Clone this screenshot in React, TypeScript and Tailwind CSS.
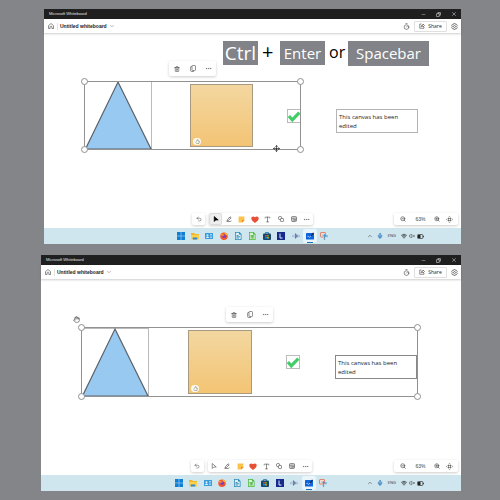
import type { ReactNode } from "react";
import {
  Trash2,
  Copy,
  Ellipsis,
  Undo2,
  Timer,
  ChevronDown,
  ChevronUp,
  ZoomIn,
  ZoomOut,
  Minus,
  X,
  Mic,
  Wifi,
  VolumeX,
  Type,
  Hand,
  Move,
} from "lucide-react";

const HomeIcon = () => (
  <svg viewBox="0 0 12 12" className="size-[6px]" fill="none" stroke="#444" strokeWidth="1.2">
    <path d="M1 5.2 6 1l5 4.2V11H7.8V7.5a1 1 0 0 0-1-1H5.2a1 1 0 0 0-1 1V11H1z" strokeLinejoin="round" />
  </svg>
);

const GearIcon = () => (
  <svg viewBox="0 0 12 12" className="size-[7px]" fill="none" stroke="#444" strokeWidth="1.1">
    <path d="M4.7 1h2.6l.5 1.4 1.7-.2 1.2 2.2L9.700 6l1 1.600-1.200 2.200-1.700-.2L7.300 11H4.700l-.5-1.400-1.700.2-1.200-2.200 1-1.600-1-1.600 1.200-2.200 1.700.2z" strokeLinejoin="round" />
    <circle cx="6" cy="6" r="1.7" />
  </svg>
);

const ShareIcon = () => (
  <svg viewBox="0 0 12 12" className="size-[6px]" fill="none" stroke="#444" strokeWidth="1.2">
    <path d="M5 2H1.500v8.500H10V8M4 7.500C4.300 5 6 4 8 4V2l3 3-3 3V6C6 6 5 6.400 4 7.500z" strokeLinejoin="round" />
  </svg>
);

const FitIcon = () => (
  <svg viewBox="0 0 14 14" className="size-[7px]" fill="none" stroke="#444" strokeWidth="1.2">
    <rect x="4.500" y="4.500" width="5" height="5" />
    <path d="M5 2.500 7 .7l2 1.800M5 11.500l2 1.800 2-1.800M2.500 5 .7 7l1.800 2M11.500 5l1.800 2-1.800 2" />
  </svg>
);

const PointerIcon = ({ filled }: { filled: boolean }) => (
  <svg viewBox="0 0 12 12" className="size-[6px]" fill={filled ? "#000" : "none"} stroke={filled ? "#000" : "#555"} strokeWidth="1.3">
    <path d="M2.500 1v10L5.500 8h5z" strokeLinejoin="round" />
  </svg>
);

const PenIcon = () => (
  <svg viewBox="0 0 12 12" className="size-[6px]" fill="none" stroke="#444" strokeWidth="1.2">
    <path d="M2.500 8 8 1.500 10.300 3.500 5 9l-3 .5zM1 11h7c1 0 2-.5 3-1.500M7 3l2 2" strokeLinejoin="round" />
  </svg>
);

const NoteIcon = () => (
  <svg viewBox="0 0 12 12" className="size-[7px]">
    <path d="M1 1h10v6.500L7.500 11H1z" fill="#fbc34b" />
    <path d="M11 7H7v4z" fill="#e8861c" />
  </svg>
);

const HeartIcon = () => (
  <svg viewBox="0 0 14 12" className="h-[7px] w-[8px]">
    <path d="M7 12C3 9.500.5 7 .5 4 .5 1 4.500-.6 7 2.200 9.500-.6 13.500 1 13.500 4c0 3-2.500 5.500-6.500 8z" fill="#e94f35" />
  </svg>
);

const ShapesIcon = () => (
  <svg viewBox="0 0 12 12" className="size-[6px]" fill="none" stroke="#444" strokeWidth="1.2">
    <circle cx="4.200" cy="4.200" r="3.400" />
    <rect x="5" y="5" width="6" height="6" rx="1.200" fill="#fff" />
  </svg>
);

const TemplateIcon = () => (
  <svg viewBox="0 0 12 12" className="size-[6px]" fill="none" stroke="#444" strokeWidth="1.2">
    <rect x="1" y="1" width="10" height="10" rx="1.800" />
    <path d="M1 4h10M4 4v7M6 6.200h3.500v2.500H6z" />
  </svg>
);

const BatteryIcon = () => (
  <svg viewBox="0 0 14 10" className="h-[5px] w-[7px]">
    <rect x="1" y="1" width="10.500" height="8" rx="1.500" fill="none" stroke="#333" strokeWidth="1.400" />
    <path d="M2 2h5v6H2zM12.500 3.500H14v3h-1.500z" fill="#222" />
  </svg>
);

const taskApps: { name: string; art: ReactNode; open?: boolean }[] = [
  {
    name: "Start",
    art: <path d="M0 0h7.500v7.500H0zM8.500 0H16v7.500H8.500zM0 8.500h7.500V16H0zM8.500 8.500H16V16H8.500z" fill="#0f7fd6" />,
  },
  {
    name: "File Explorer",
    art: (
      <>
        <path d="M0 2h6l2 2h8v10H0z" fill="#f0b21f" />
        <path d="M0 5.500h16V15H0z" fill="#fbd04b" />
        <path d="M3.500 11h9v4h-9z" fill="#2c84d8" />
      </>
    ),
  },
  {
    name: "Contacts",
    art: (
      <>
        <rect y="2" width="16" height="12" rx="1" fill="#3a9bdc" />
        <circle cx="5" cy="6.500" r="2" fill="#d6f0fa" />
        <path d="M2 12c0-4 6-4 6 0z" fill="#d6f0fa" />
        <path d="M10 5h4M10 8h4M10 11h4" stroke="#d6f0fa" strokeWidth="1.300" />
      </>
    ),
  },
  {
    name: "Firefox",
    art: (
      <>
        <circle cx="8" cy="8.500" r="7.500" fill="#f5582a" />
        <path d="M8 1c5 0 8 4 7.500 8C15 7 14 6 12 6z" fill="#fdc02f" />
        <circle cx="8.500" cy="8.500" r="3.700" fill="#7c3cc4" />
        <path d="M1 5 3 2l2 2.500L9 6 6 8z" fill="#fd9a2b" />
      </>
    ),
  },
  {
    name: "Writer",
    art: (
      <>
        <path d="M2 0h9l4 4v12H2z" fill="#2a88b5" />
        <path d="M3.500 1.500H10V5h3.500v9.500h-10z" fill="#d9eff7" />
        <path d="M5 7h4M5 9.500h7M5 12h5" stroke="#1672a3" strokeWidth="1.400" />
      </>
    ),
  },
  {
    name: "Calc",
    art: (
      <>
        <path d="M2 0h9l4 4v12H2z" fill="#48b43f" />
        <path d="M3.500 1.500H10V5h3.500v9.500h-10z" fill="#daf3d5" />
        <path d="M5 7h7M5 9.500h7M5 12h7M8.500 7v5" stroke="#37a52d" strokeWidth="1.300" />
      </>
    ),
  },
  {
    name: "Store",
    art: (
      <>
        <path d="M5 4V1h6v3" fill="none" stroke="#1b6ca8" strokeWidth="1.500" />
        <rect y="3" width="16" height="13" rx="2" fill="#15466f" />
        <path d="M4.500 6h3v3h-3z" fill="#f25022" />
        <path d="M8.500 6h3v3h-3z" fill="#7fba00" />
        <path d="M4.500 10h3v3h-3z" fill="#00a4ef" />
        <path d="M8.500 10h3v3h-3z" fill="#ffb900" />
      </>
    ),
  },
  {
    name: "L",
    art: (
      <>
        <rect width="16" height="16" fill="#152a8c" />
        <path d="M6 3v9h5" fill="none" stroke="#fff" strokeWidth="1.800" />
      </>
    ),
  },
  {
    name: "Sound recorder",
    art: (
      <>
        <path d="M1 7v3M4 5v6M12 5v6M15 7v3" stroke="#7aa5cc" strokeWidth="1.500" />
        <path d="M6 2 12 8l-6 6z" fill="#3c78c4" />
        <path d="M7 5v6l3-3z" fill="#dc7a78" />
      </>
    ),
  },
  {
    name: "Whiteboard",
    open: true,
    art: (
      <>
        <rect y="2" width="16" height="13" rx="1" fill="#0b66e0" />
        <path d="M3 9c2-3 3 4 5 1s2-1 3 0" fill="none" stroke="#fff" strokeWidth="1.300" />
        <path d="m9 8 5-7 2 1.500L11 9z" fill="#16233d" />
      </>
    ),
  },
  {
    name: "Snipping Tool",
    art: (
      <>
        <rect x="1" y="1" width="10" height="9" rx="1" fill="#f4dcd3" stroke="#d9684d" strokeWidth="1.500" />
        <path d="m5 6 8 2M9 4v8" stroke="#3293cf" strokeWidth="1.600" />
        <circle cx="14" cy="8.500" r="1.600" fill="none" stroke="#3293cf" />
        <circle cx="9" cy="14" r="1.600" fill="#4c7997" />
      </>
    ),
  },
];

function IconButton({ label, children, className = "" }: { label: string; children: ReactNode; className?: string }) {
  return (
    <button aria-label={label} className={`flex h-[12px] items-center justify-center text-[#444] ${className}`}>
      {children}
    </button>
  );
}

function TitleBar() {
  return (
    <div className="flex h-[10px] items-center bg-[#1f1f1f] pl-[5px] text-[#e4e4e4]">
      <span className="grow font-['Liberation_Sans',sans-serif] text-[4px] leading-[10px]">Microsoft Whiteboard</span>
      <IconButton label="Minimize" className="w-[15px]"><Minus className="size-[5px] text-[#ddd]" /></IconButton>
      <IconButton label="Restore" className="w-[15px]"><Copy className="size-[5px] -scale-x-100 text-[#ddd]" strokeWidth={3} /></IconButton>
      <IconButton label="Close" className="w-[15px]"><X className="size-[6px] text-[#ddd]" /></IconButton>
    </div>
  );
}

function Header() {
  return (
    <header className="relative z-10 flex h-[14px] items-center bg-white pl-[4px] text-[#222] shadow-[0_1px_2px_rgba(0,0,0,0.2)]">
      <IconButton label="Home" className="mr-[3px]"><HomeIcon /></IconButton>
      <span className="mr-[2px] h-[7px] w-px bg-[#e2e2e2]" />
      <button className="flex items-center gap-[2px] font-['Liberation_Sans',sans-serif] text-[5px] leading-[8px] font-bold">
        Untitled whiteboard
        <ChevronDown className="size-[6px] text-[#777]" strokeWidth={2} />
      </button>
      <div className="grow" />
      <IconButton label="Timer" className="mr-[4px] w-[7px]"><Timer className="size-[7px]" /></IconButton>
      <button className="mr-[4px] flex h-[11px] w-[33px] items-center justify-center gap-[3px] rounded-[1px] border border-[#e0e0e0] text-[5px] leading-[8px]">
        <ShareIcon />
        Share
      </button>
      <IconButton label="Settings" className="mr-[3px]"><GearIcon /></IconButton>
    </header>
  );
}

const panel = "flex rounded-[2px] bg-white shadow-[0_1px_3px_rgba(0,0,0,0.2)]";

function BottomTools({ selected }: { selected: boolean }) {
  const tool = "w-[13px]";
  return (
    <>
      <div className="absolute inset-x-0 bottom-[3px] flex justify-center gap-[4px]">
        <div className={panel}>
          <IconButton label="Undo" className={tool}><Undo2 className="size-[6px]" /></IconButton>
        </div>
        <div role="toolbar" aria-label="Tools" className={panel}>
          <IconButton label="Select" className={selected ? "w-[13px] rounded-[2px] border border-[#dcdcdc] bg-[#eee]" : tool}>
            <PointerIcon filled={selected} />
          </IconButton>
          <IconButton label="Inking" className={tool}><PenIcon /></IconButton>
          <IconButton label="Notes" className={tool}><NoteIcon /></IconButton>
          <IconButton label="Reactions" className={tool}><HeartIcon /></IconButton>
          <IconButton label="Text" className={tool}><Type className="size-[7px]" /></IconButton>
          <IconButton label="Shapes" className={tool}><ShapesIcon /></IconButton>
          <IconButton label="Templates" className={tool}><TemplateIcon /></IconButton>
          <IconButton label="More" className={tool}><Ellipsis className="size-[7px]" strokeWidth={1.5} /></IconButton>
        </div>
      </div>
      <div className={`${panel} absolute right-[3px] bottom-[3px]`}>
        <IconButton label="Zoom out" className="w-[18px]"><ZoomOut className="size-[6px]" strokeWidth={2.5} /></IconButton>
        <span className="w-[17px] text-center font-['Liberation_Sans',sans-serif] text-[5px] leading-[12px] text-[#444]">63%</span>
        <IconButton label="Zoom in" className="w-[16px]"><ZoomIn className="size-[6px]" strokeWidth={2.5} /></IconButton>
        <IconButton label="Fit to screen" className="mr-[5px] w-[8px]"><FitIcon /></IconButton>
      </div>
    </>
  );
}

function TaskBar() {
  return (
    <nav aria-label="Taskbar" className="grid h-[16px] grid-cols-[1fr_auto_1fr] items-center bg-[#cfe6ee]">
      <span />
      <div className="flex w-[158px] justify-between">
        {taskApps.map((app) => (
          <button
            key={app.name}
            aria-label={app.name}
            className={`relative flex h-[14px] w-[14px] items-center justify-center rounded-[2px] ${app.open ? "bg-[#e9f5f9]" : ""}`}
          >
            <svg viewBox="0 0 16 16" className="size-[8px]">{app.art}</svg>
            {app.open && <span className="absolute bottom-0 left-[4px] h-px w-[6px] bg-[#1675bd]" />}
          </button>
        ))}
      </div>
      <div className="mr-[37px] flex items-center justify-end text-[#333]">
        <ChevronUp className="mr-[4px] size-[6px]" />
        <Mic className="mr-[5px] size-[6px] text-[#2c74bb]" strokeWidth={3} />
        <span className="mr-[5px] text-[4px] leading-[8px]">ENG</span>
        <Wifi className="mr-[2px] size-[6px]" strokeWidth={3} />
        <VolumeX className="mr-[2px] size-[6px]" />
        <BatteryIcon />
      </div>
    </nav>
  );
}

function Selection({ className }: { className: string }) {
  const handle = "absolute size-[7px] rounded-full border border-[#909090] bg-white";
  return (
    <div className={`absolute border border-[#929292] ${className}`}>
      <span className={`${handle} -top-[4px] -left-[4px]`} />
      <span className={`${handle} -top-[4px] -right-[4px]`} />
      <span className={`${handle} -bottom-[4px] -left-[4px]`} />
      <span className={`${handle} -right-[4px] -bottom-[4px]`} />
    </div>
  );
}

function ContextMenu({ className }: { className: string }) {
  return (
    <div role="toolbar" aria-label="Selection" className={`${panel} absolute h-[15px] items-center ${className}`}>
      <IconButton label="Delete" className="w-[16px]"><Trash2 className="size-[6px]" strokeWidth={2.3} /></IconButton>
      <IconButton label="Copy" className="w-[15px]">
        <svg viewBox="0 0 12 14" className="h-[7px] w-[6px]" fill="none" stroke="currentColor" strokeWidth="1.2">
          <rect x="4" y="1" width="7" height="10" rx="1.500" />
          <path d="M4 3H2.500Q1.200 3 1.200 4.500v6Q1.200 13 3.500 13H8" />
        </svg>
      </IconButton>
      <IconButton label="More options" className="w-[16px]"><Ellipsis className="size-[7px]" strokeWidth={1.5} /></IconButton>
    </div>
  );
}

function Triangle({ className }: { className: string }) {
  return (
    <div className={`absolute h-[69px] w-[68px] border border-[#bbb] ${className}`}>
      <svg viewBox="0 0 66 67" className="size-full overflow-visible">
        <path d="M33 0 66 67H.5z" fill="#98c9f1" stroke="#5c6268" strokeWidth="1.200" />
      </svg>
    </div>
  );
}

function StickyNote({ className }: { className: string }) {
  return (
    <div className={`absolute border border-[#a89a80] bg-linear-to-b from-[#f3d7a0] to-[#f3c474] ${className}`}>
      <button aria-label="Like" className="absolute bottom-[1px] left-[2px] flex h-[7px] w-[8px] items-center justify-center rounded-full bg-[#fffaf0]">
        <svg viewBox="0 0 12 12" className="size-[5px]" fill="none" stroke="#777" strokeWidth="1.300">
          <path d="M3 6 6 1l1.500 1L7 5h3.500l-1 6H4L2 8.500z" />
        </svg>
      </button>
    </div>
  );
}

function Check({ className }: { className: string }) {
  return (
    <div className={`absolute size-[14px] border border-[#bbb] ${className}`}>
      <svg viewBox="0 0 14 14" className="size-full overflow-visible">
        <path d="M1 7 5 11.500 13.200 3" fill="none" stroke="#43cc68" strokeWidth="3.600" />
      </svg>
    </div>
  );
}

function TextBox({ className }: { className: string }) {
  return (
    <p className={`absolute w-[82px] border px-[2px] pt-[3px] pb-px text-[6px] leading-[9px] text-[#222] ${className}`}>
      This canvas has been edited
    </p>
  );
}

function Screen({ selected, canvasClass, children }: { selected: boolean; canvasClass: string; children: ReactNode }) {
  return (
    <section className="bg-white">
      <TitleBar />
      <Header />
      <div className={`relative ${canvasClass}`}>
        {children}
        <BottomTools selected={selected} />
      </div>
      <TaskBar />
    </section>
  );
}

const keycap = "absolute flex items-center justify-center bg-[#828388] text-white";

export default function App() {
  return (
    <main className="flex min-h-screen flex-col gap-[11px] bg-[#848589] pt-[9px] pr-[39px] pb-[9px] font-['Open_Sans','Noto_Sans',sans-serif]">
      <div className="pl-[44px]">
        <Screen selected canvasClass="h-[195px]">
          <kbd className={`${keycap} top-[8px] left-[179px] h-[24px] w-[35px] font-['Open_Sans',sans-serif] text-[19px]`}>Ctrl</kbd>
          <span className="absolute top-[8px] left-[218px] text-[20px] leading-[22px] font-medium text-black">+</span>
          <kbd className={`${keycap} top-[8px] left-[236px] h-[24px] w-[45px] font-['Open_Sans',sans-serif] text-[15px]`}>Enter</kbd>
          <span className="absolute top-[8px] left-[285px] text-[16px] leading-[22px] text-black">or</span>
          <kbd className={`${keycap} top-[8px] left-[304px] h-[25px] w-[81px] font-['Open_Sans',sans-serif] text-[15px]`}>Spacebar</kbd>
          <ContextMenu className="top-[28px] left-[125px]" />
          <Triangle className="top-[48px] left-[40px]" />
          <StickyNote className="top-[51px] left-[146px] size-[63px]" />
          <Check className="top-[76px] left-[243px]" />
          <Selection className="top-[48px] left-[40px] h-[69px] w-[217px]" />
          <TextBox className="top-[76px] left-[292px] border-[#b4b4b4]" />
          <Move className="absolute top-[112px] left-[229px] size-[7px] text-black" />
        </Screen>
      </div>
      <div className="pl-[41px]">
        <Screen selected={false} canvasClass="h-[196px]">
          <Hand className="absolute top-[37px] left-[32px] size-[7px] text-[#444]" />
          <ContextMenu className="top-[28px] left-[185px]" />
          <Triangle className="top-[49px] left-[40px]" />
          <StickyNote className="top-[51px] left-[147px] size-[64px]" />
          <Check className="top-[76px] left-[245px]" />
          <Selection className="top-[48px] left-[40px] h-[70px] w-[337px]" />
          <TextBox className="top-[76px] left-[294px] border-[#888]" />
        </Screen>
      </div>
    </main>
  );
}
